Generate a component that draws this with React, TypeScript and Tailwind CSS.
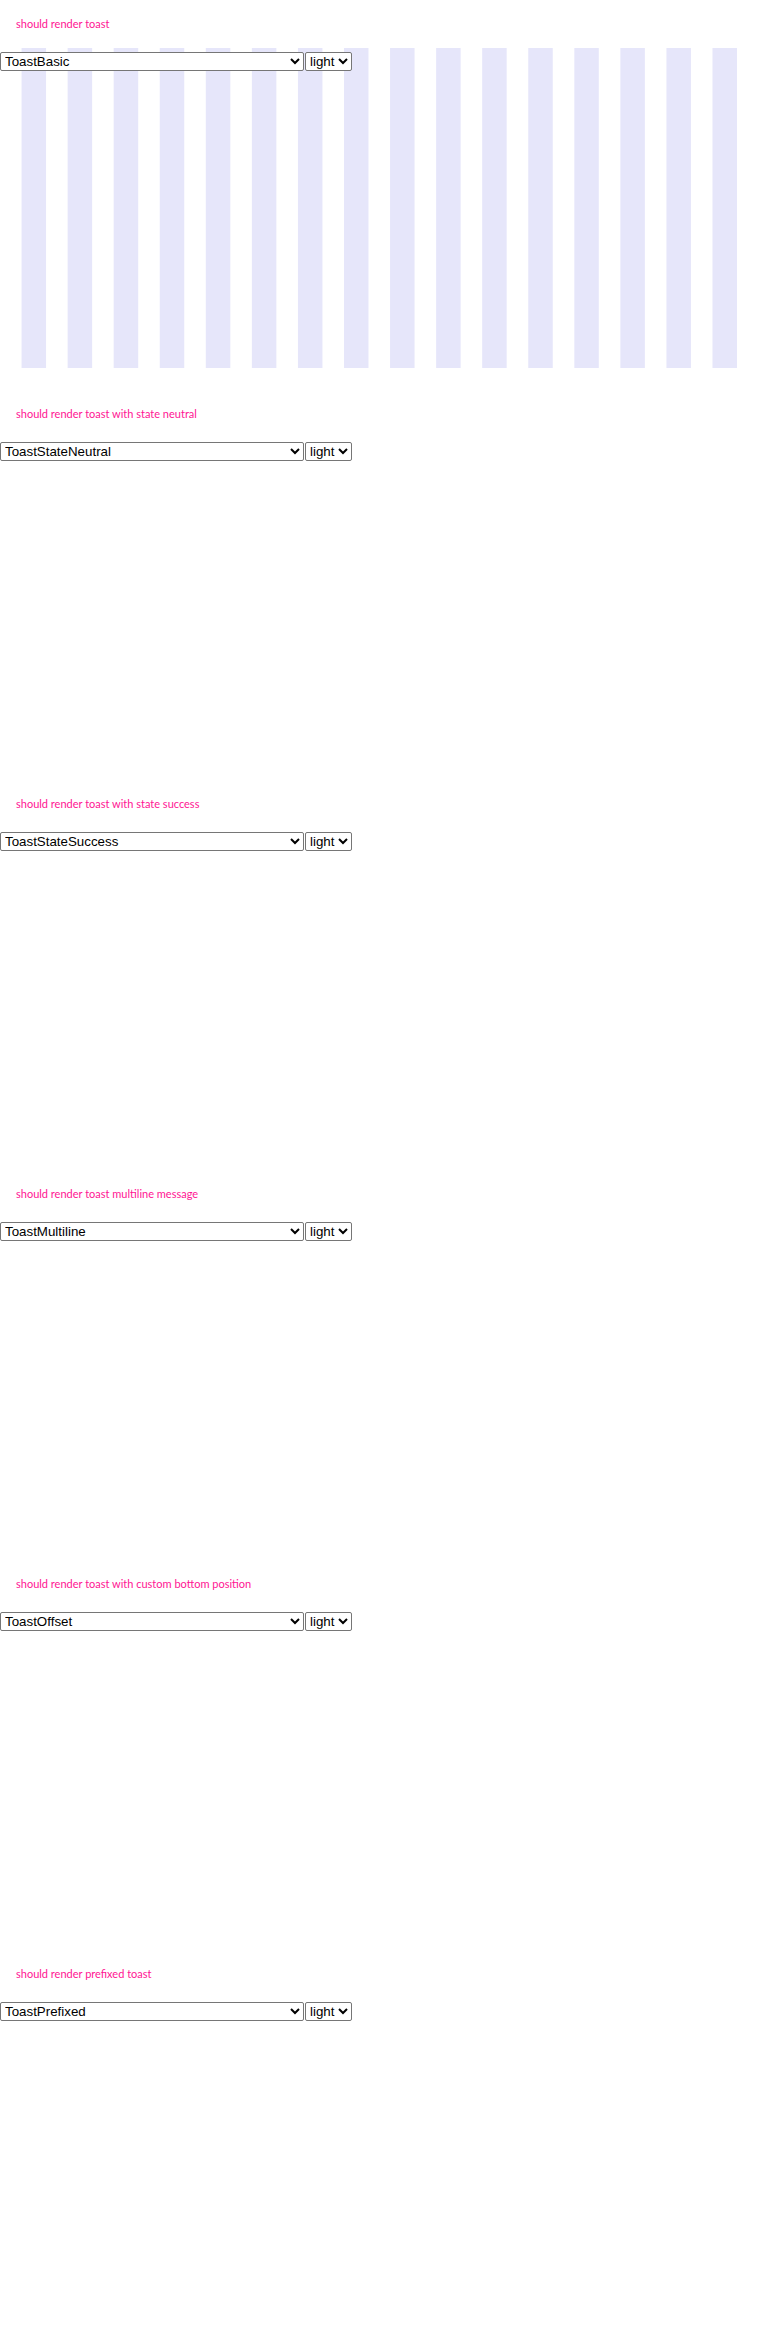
const stories = [
  { title: 'should render toast', name: 'ToastBasic', striped: true },
  { title: 'should render toast with state neutral', name: 'ToastStateNeutral' },
  { title: 'should render toast with state success', name: 'ToastStateSuccess' },
  { title: 'should render toast multiline message', name: 'ToastMultiline' },
  { title: 'should render toast with custom bottom position', name: 'ToastOffset' },
  { title: 'should render prefixed toast', name: 'ToastPrefixed' },
];

const Story = ({ title, name, striped }: { title: string; name: string; striped?: boolean }) => {
  return (
    <section className="h-[390px]">
      <h2 className="px-4 pt-4 pb-4 text-[11px] leading-4 text-[#ff1493] font-['Lato',sans-serif]">
        {title}
      </h2>
      <div
        className={
          striped
            ? 'h-[320px] w-[740px] pt-1 bg-[linear-gradient(90deg,transparent_22px,#e6e6fa_22px,#e6e6fa_47px,transparent_47px)] bg-[length:46.07px_100%]'
            : 'h-[320px] w-[740px] pt-1'
        }
      >
        <div className="flex gap-[1px] font-['Liberation_Sans',Arial,sans-serif] text-[13.333px]">
          <select
            defaultValue={name}
            className="w-[304px] h-[19px] bg-white text-black border border-[#767676] rounded-[2px]"
          >
            <option>{name}</option>
          </select>
          <select
            defaultValue="light"
            className="w-[47px] h-[19px] bg-white text-black border border-[#767676] rounded-[2px]"
          >
            <option>light</option>
            <option>dark</option>
          </select>
        </div>
      </div>
    </section>
  );
};

export default function App() {
  return (
    <div className="bg-white w-[760px]">
      {stories.map((s) => (
        <Story key={s.name} {...s} />
      ))}
    </div>
  );
}
